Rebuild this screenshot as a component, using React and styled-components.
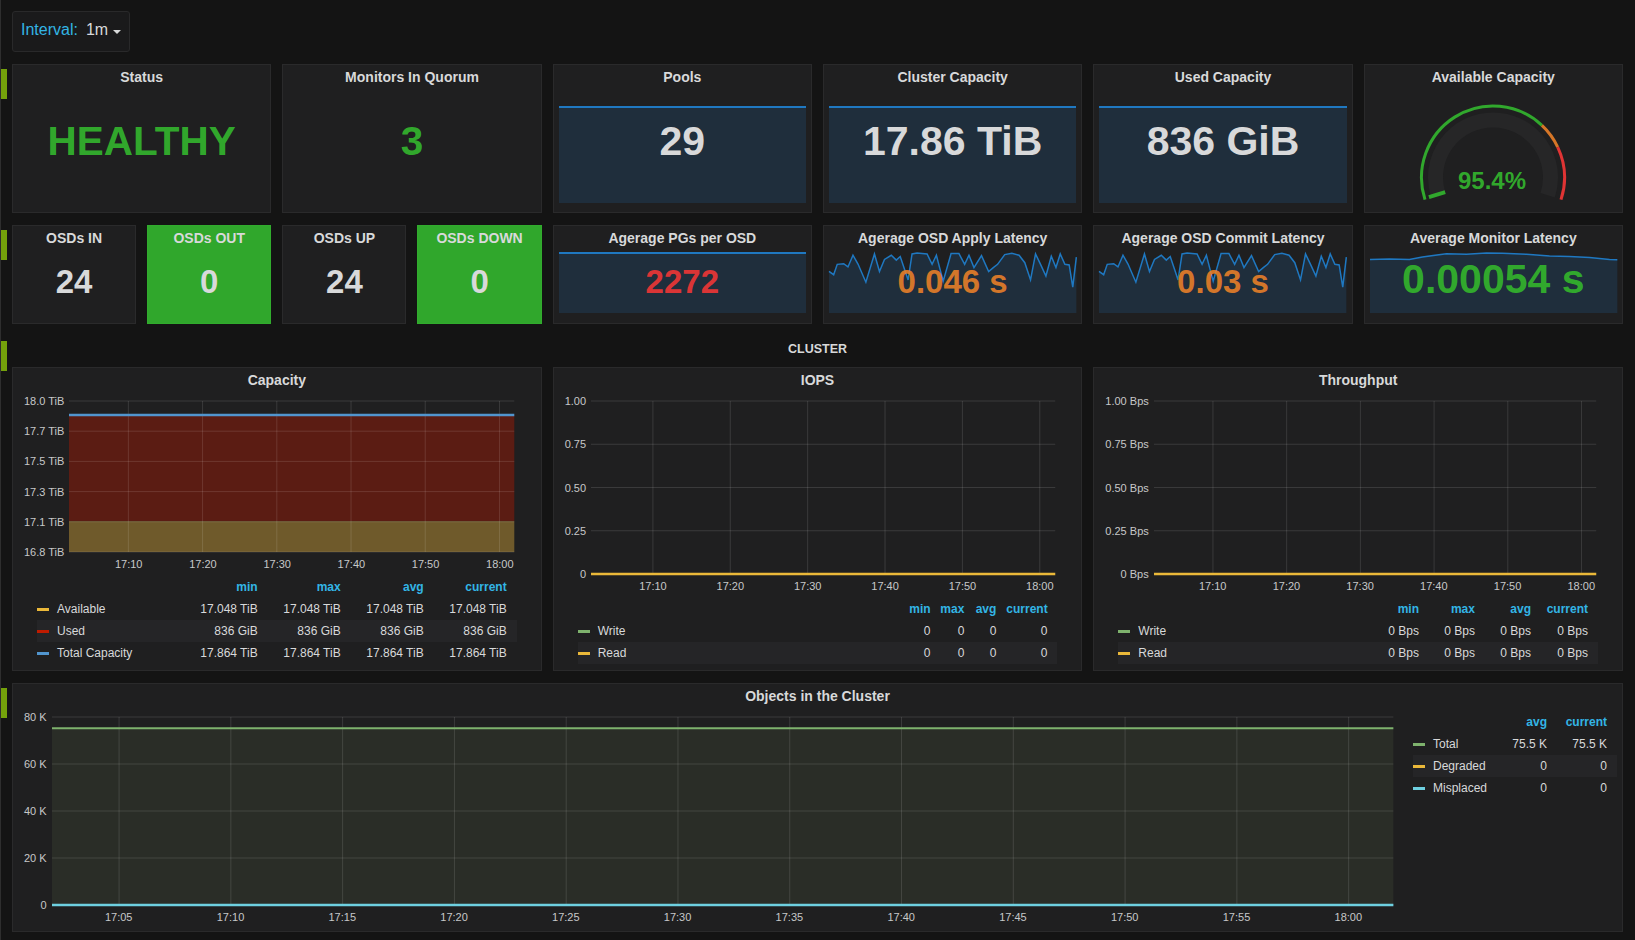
import React from "react";
import styled, { createGlobalStyle } from "styled-components";

const GREEN = "rgba(50, 172, 45, 0.97)";
const ORANGE = "rgba(237, 129, 40, 0.89)";
const RED = "rgba(245, 54, 54, 0.9)";
const TEXT = "#d8d9da";

const GlobalStyle = createGlobalStyle`
  html, body {
    margin: 0;
    padding: 0;
    background: #141414;
  }
  body {
    font-family: "Liberation Sans", Arial, Helvetica, sans-serif;
    color: ${TEXT};
  }
  * {
    box-sizing: border-box;
  }
`;

// sparkline samples, in the coordinates of their own viewBox
const latencySeries = [
  [809, 812], [822, 822], [832, 790], [850, 788], [862, 798], [876, 762],
  [890, 789], [912, 845], [936, 758], [950, 812], [964, 775], [983, 762],
  [997, 777], [1008, 766], [1020, 805], [1030, 838], [1041, 758], [1055, 755],
  [1083, 758], [1097, 790], [1109, 762], [1118, 800], [1128, 842], [1150, 757],
  [1172, 757], [1188, 790], [1200, 762], [1214, 800], [1235, 763], [1255, 812],
  [1268, 800], [1280, 790], [1300, 760], [1320, 756], [1340, 762], [1356, 785],
  [1372, 838], [1386, 758], [1400, 790], [1415, 826], [1430, 765], [1443, 800],
  [1455, 758], [1468, 790], [1480, 792], [1490, 860], [1500, 768]
];
const latencyBox = [809, 752, 691, 188];

const monitorSeries = [
  [1370.6, 258.5], [1390, 258], [1410, 258.6], [1423, 256], [1447, 252.7],
  [1467, 253.3], [1487, 252], [1503, 252.3], [1527, 253.3], [1550, 255],
  [1570, 255.7], [1590, 256.7], [1610, 258.6], [1617.8, 259]
];
const monitorBox = [1370.6, 251, 247.2, 62];

const tenMinuteTicks = ["17:10", "17:20", "17:30", "17:40", "17:50", "18:00"].map(
  (label, i) => ({ label, at: (8 + i * 10) / 60 })
);
const fiveMinuteTicks = [
  "17:05", "17:10", "17:15", "17:20", "17:25", "17:30",
  "17:35", "17:40", "17:45", "17:50", "17:55", "18:00"
].map((label, i) => ({ label, at: (3 + i * 5) / 60 }));

const Page = styled.div`
  height: 940px;
  overflow: hidden;
  padding: 11px 12px 0 0;
  border-left: 1px solid #2e2e2e;
`;

const TopBar = styled.div`
  padding-left: 11px;
  display: flex;
`;

const IntervalPicker = styled.div`
  display: inline-flex;
  align-items: center;
  height: 41px;
  padding: 0 8px 3px;
  background: #1a1a1b;
  border: 1px solid #29292a;
  border-radius: 3px;
  font-size: 16px;
`;

const IntervalLabel = styled.span`
  color: #33b5e5;
  margin-right: 8px;
`;

const IntervalValue = styled.span`
  color: ${TEXT};
`;

const Caret = styled.span`
  width: 0;
  height: 0;
  margin: 3px 0 0 5px;
  border-left: 4px solid transparent;
  border-right: 4px solid transparent;
  border-top: 4px solid ${TEXT};
`;

const Row = styled.section`
  display: flex;
  margin-top: 12px;
`;

const Gutter = styled.div`
  width: 11px;
  flex: none;
`;

const Grip = styled.div`
  width: 6px;
  height: 30px;
  margin-top: 5px;
  background: #74a10b;
`;

const RowBody = styled.div`
  flex: 1;
  min-width: 0;
  display: flex;
  flex-direction: column;
`;

const RowTitle = styled.div`
  height: 31px;
  padding-top: 5px;
  text-align: center;
  font-size: 12.5px;
  font-weight: bold;
  line-height: 16px;
  color: ${TEXT};
`;

const PanelGrid = styled.div`
  display: grid;
  grid-template-columns: repeat(12, 1fr);
  column-gap: 11px;
  height: ${(p) => p.$h}px;
`;

const Panel = styled.div`
  grid-column: span ${(p) => p.$span};
  position: relative;
  display: flex;
  flex-direction: column;
  min-width: 0;
  overflow: hidden;
  background: ${(p) => p.$bg || "#1f1f20"};
  border: 1px solid ${(p) => p.$bg || "#2a2a2b"};
`;

const PanelTitle = styled.div`
  padding-top: 4px;
  height: 21px;
  flex: none;
  text-align: center;
  font-size: 14px;
  font-weight: bold;
  line-height: 16px;
  color: ${TEXT};
  white-space: nowrap;
`;

const StatValue = styled.div`
  position: absolute;
  inset: 0;
  display: flex;
  align-items: center;
  justify-content: center;
  padding-top: ${(p) => p.$shift}px;
  font-size: ${(p) => p.$size}px;
  font-weight: bold;
  line-height: 1;
  color: ${(p) => p.$color || TEXT};
  white-space: nowrap;
  pointer-events: none;
`;

const SparkBox = styled.div`
  position: absolute;
  left: 5px;
  right: 5px;
  bottom: ${(p) => p.$bottom}px;
  height: ${(p) => p.$height}px;
`;

const FlatSpark = styled(SparkBox)`
  background: rgba(31, 118, 189, 0.18);
  border-top: 2px solid #1f78c1;
`;

const SparkSvg = styled.svg`
  display: block;
  width: 100%;
  height: 100%;
  overflow: visible;
`;

const GaugeBox = styled.div`
  display: flex;
  justify-content: center;
  margin-top: 16px;
`;

const GraphBody = styled.div`
  flex: 1;
  min-height: 0;
  display: flex;
  flex-direction: ${(p) => (p.$side ? "row" : "column")};
  padding-bottom: ${(p) => (p.$side ? 0 : 6)}px;
`;

const ChartGrid = styled.div`
  flex: 1;
  min-height: 0;
  min-width: 0;
  display: grid;
  grid-template-columns: auto 1fr;
  grid-template-rows: 1fr 24px;
  column-gap: 5px;
  margin: 12px 0 ${(p) => p.$mb || 0}px;
  padding: 0 ${(p) => p.$padR}px 0 11px;
`;

const YAxis = styled.div`
  display: flex;
  flex-direction: column;
  justify-content: space-between;
  margin: -6px 0;
  text-align: right;
  font-size: 11px;
  line-height: 12px;
  color: #c7c8c9;
  white-space: nowrap;
`;

const PlotArea = styled.div`
  position: relative;
  min-width: 0;
`;

const PlotSvg = styled.svg`
  position: absolute;
  inset: 0;
  width: 100%;
  height: 100%;
  overflow: visible;
`;

const XAxis = styled.div`
  grid-column: 2;
  position: relative;
  font-size: 11px;
  line-height: 12px;
  color: #c7c8c9;
`;

const XTick = styled.span`
  position: absolute;
  top: 6px;
  transform: translateX(-50%);
  white-space: nowrap;
`;

const Legend = styled.div`
  flex: none;
  width: ${(p) => p.$width || "auto"};
  margin: ${(p) => p.$margin};
  align-self: ${(p) => (p.$width ? "flex-start" : "stretch")};
  font-size: 12px;
`;

const LegendRow = styled.div`
  display: grid;
  grid-template-columns: ${(p) => p.$cols};
  align-items: center;
  height: 22px;
  white-space: nowrap;
  &:nth-child(2n + 3) {
    background: #252527;
  }
`;

const LegendCell = styled.span`
  text-align: right;
  padding-right: 10px;
  color: ${TEXT};
`;

const LegendHead = styled(LegendCell)`
  font-weight: bold;
  color: #33b5e5;
`;

const LegendLabel = styled.span`
  display: flex;
  align-items: center;
  gap: 8px;
  color: ${TEXT};
`;

const Swatch = styled.i`
  width: 12px;
  height: 3px;
  background: ${(p) => p.$color};
`;

const SparkLine = ({ points, box, height, bottom }) => {
  const [x0, y0, w, h] = box;
  const line = points.map((p) => p.join(",")).join(" ");
  const area = `${x0},${y0 + h} ${line} ${x0 + w},${y0 + h}`;
  return (
    <SparkBox $height={height} $bottom={bottom}>
      <SparkSvg viewBox={box.join(" ")} preserveAspectRatio="none">
        <polygon points={area} fill="rgba(31, 118, 189, 0.18)" />
        <polyline
          points={line}
          fill="none"
          stroke="#1f78c1"
          strokeWidth="1.5"
          vectorEffect="non-scaling-stroke"
        />
      </SparkSvg>
    </SparkBox>
  );
};

const Stat = ({ title, span, value, color, size, shift, bg, children }) => (
  <Panel $span={span} $bg={bg}>
    <PanelTitle>{title}</PanelTitle>
    {children}
    <StatValue $color={color} $size={size} $shift={shift}>
      {value}
    </StatValue>
  </Panel>
);

const polar = (cx, cy, r, deg) => {
  const a = (deg * Math.PI) / 180;
  return [cx + r * Math.cos(a), cy - r * Math.sin(a)];
};

const arcPath = (cx, cy, r, from, to) => {
  const [x1, y1] = polar(cx, cy, r, from);
  const [x2, y2] = polar(cx, cy, r, to);
  const large = from - to > 180 ? 1 : 0;
  return `M${x1} ${y1} A${r} ${r} 0 ${large} 1 ${x2} ${y2}`;
};

const Gauge = () => {
  const cx = 78;
  const cy = 75.5;
  const start = 198;
  const end = -18;
  const span = start - end;
  const g = start - span * 0.7;
  const o = start - span * 0.8;
  const [mx1, my1] = polar(cx, cy, 50, start - 1);
  const [mx2, my2] = polar(cx, cy, 67, start - 1);
  return (
    <svg width="156" height="104" viewBox="0 0 156 104">
      <path d={arcPath(cx, cy, 57.5, start, end)} fill="none" stroke="#262627" strokeWidth="15" />
      <path d={arcPath(cx, cy, 71.5, start, g)} fill="none" stroke={GREEN} strokeWidth="3" />
      <path d={arcPath(cx, cy, 71.5, g, o)} fill="none" stroke={ORANGE} strokeWidth="3" />
      <path d={arcPath(cx, cy, 71.5, o, end)} fill="none" stroke={RED} strokeWidth="3" />
      <line x1={mx1} y1={my1} x2={mx2} y2={my2} stroke={GREEN} strokeWidth="4" />
      <text
        x="77"
        y="87"
        textAnchor="middle"
        fontFamily='"Liberation Sans", Arial, sans-serif'
        fontWeight="bold"
        fontSize="24"
        fill={GREEN}
      >
        95.4%
      </text>
    </svg>
  );
};

const Chart = ({ yLabels, ticks, under, over, padR, mb }) => {
  const n = yLabels.length;
  return (
    <ChartGrid $padR={padR} $mb={mb}>
      <YAxis>
        {yLabels.map((l) => (
          <span key={l}>{l}</span>
        ))}
      </YAxis>
      <PlotArea>
        <PlotSvg viewBox="0 0 1000 1000" preserveAspectRatio="none">
          {under}
          {yLabels.map((l, i) => (
            <line
              key={"h" + l}
              x1="0"
              x2="1000"
              y1={(i / (n - 1)) * 1000}
              y2={(i / (n - 1)) * 1000}
              stroke="rgba(255,255,255,0.12)"
              strokeWidth="1"
              vectorEffect="non-scaling-stroke"
            />
          ))}
          {ticks.map((t) => (
            <line
              key={"v" + t.label}
              x1={t.at * 1000}
              x2={t.at * 1000}
              y1="0"
              y2="1000"
              stroke="rgba(255,255,255,0.12)"
              strokeWidth="1"
              vectorEffect="non-scaling-stroke"
            />
          ))}
          {over}
        </PlotSvg>
      </PlotArea>
      <XAxis>
        {ticks.map((t) => (
          <XTick key={t.label} style={{ left: `${t.at * 100}%` }}>
            {t.label}
          </XTick>
        ))}
      </XAxis>
    </ChartGrid>
  );
};

const HLine = ({ y, color, width = 2 }) => (
  <line
    x1="0"
    x2="1000"
    y1={y}
    y2={y}
    stroke={color}
    strokeWidth={width}
    vectorEffect="non-scaling-stroke"
  />
);

const LegendTable = ({ cols, heads, rows, width, margin }) => (
  <Legend $width={width} $margin={margin}>
    <LegendRow $cols={cols}>
      <span />
      {heads.map((h) => (
        <LegendHead key={h}>{h}</LegendHead>
      ))}
    </LegendRow>
    {rows.map((r) => (
      <LegendRow key={r.name} $cols={cols}>
        <LegendLabel>
          <Swatch $color={r.color} />
          {r.name}
        </LegendLabel>
        {r.values.map((v, i) => (
          <LegendCell key={i}>{v}</LegendCell>
        ))}
      </LegendRow>
    ))}
  </Legend>
);

const GraphPanel = ({ title, span, children }) => (
  <Panel $span={span}>
    <PanelTitle>{title}</PanelTitle>
    {children}
  </Panel>
);

export default function App() {
  return (
    <>
      <GlobalStyle />
      <Page>
        <TopBar>
          <IntervalPicker>
            <IntervalLabel>Interval:</IntervalLabel>
            <IntervalValue>1m</IntervalValue>
            <Caret />
          </IntervalPicker>
        </TopBar>

        <Row>
          <Gutter>
            <Grip />
          </Gutter>
          <RowBody>
            <PanelGrid $h={149}>
              <Stat title="Status" span={2} value="HEALTHY" color={GREEN} size={40.5} shift={6} />
              <Stat title="Monitors In Quorum" span={2} value="3" color={GREEN} size={40.5} shift={6} />
              <Stat title="Pools" span={2} value="29" size={41} shift={6}>
                <FlatSpark $height={97} $bottom={9} />
              </Stat>
              <Stat title="Cluster Capacity" span={2} value="17.86 TiB" size={41} shift={6}>
                <FlatSpark $height={97} $bottom={9} />
              </Stat>
              <Stat title="Used Capacity" span={2} value="836 GiB" size={41} shift={6}>
                <FlatSpark $height={97} $bottom={9} />
              </Stat>
              <GraphPanel title="Available Capacity" span={2}>
                <GaugeBox>
                  <Gauge />
                </GaugeBox>
              </GraphPanel>
            </PanelGrid>
          </RowBody>
        </Row>

        <Row>
          <Gutter>
            <Grip />
          </Gutter>
          <RowBody>
            <PanelGrid $h={99}>
              <Stat title="OSDs IN" span={1} value="24" size={33} shift={14} />
              <Stat title="OSDs OUT" span={1} value="0" size={33} shift={14} bg={GREEN} />
              <Stat title="OSDs UP" span={1} value="24" size={33} shift={14} />
              <Stat title="OSDs DOWN" span={1} value="0" size={33} shift={14} bg={GREEN} />
              <Stat title="Agerage PGs per OSD" span={2} value="2272" color={RED} size={33} shift={14}>
                <FlatSpark $height={61} $bottom={10} />
              </Stat>
              <Stat title="Agerage OSD Apply Latency" span={2} value="0.046 s" color={ORANGE} size={33} shift={14}>
                <SparkLine points={latencySeries} box={latencyBox} height={61} bottom={10} />
              </Stat>
              <Stat title="Agerage OSD Commit Latency" span={2} value="0.03 s" color={ORANGE} size={33} shift={14}>
                <SparkLine points={latencySeries} box={latencyBox} height={61} bottom={10} />
              </Stat>
              <Stat title="Average Monitor Latency" span={2} value="0.00054 s" color={GREEN} size={41} shift={9}>
                <SparkLine points={monitorSeries} box={monitorBox} height={61} bottom={10} />
              </Stat>
            </PanelGrid>
          </RowBody>
        </Row>

        <Row>
          <Gutter>
            <Grip />
          </Gutter>
          <RowBody>
            <RowTitle>CLUSTER</RowTitle>
            <PanelGrid $h={304}>
              <GraphPanel title="Capacity" span={4}>
                <GraphBody>
                  <Chart
                    padR={26}
                    yLabels={["18.0 TiB", "17.7 TiB", "17.5 TiB", "17.3 TiB", "17.1 TiB", "16.8 TiB"]}
                    ticks={tenMinuteTicks}
                    under={
                      <>
                        <rect x="0" y="92" width="1000" height="704" fill="#5b1c13" />
                        <rect x="0" y="796" width="1000" height="204" fill="#6f5a2b" />
                      </>
                    }
                    over={<HLine y={92} color="#5195ce" width={2.5} />}
                  />
                  <LegendTable
                    margin="0 24px"
                    cols="1fr 83px 83px 83px 83px"
                    heads={["min", "max", "avg", "current"]}
                    rows={[
                      { name: "Available", color: "#eab839", values: ["17.048 TiB", "17.048 TiB", "17.048 TiB", "17.048 TiB"] },
                      { name: "Used", color: "#bf1b00", values: ["836 GiB", "836 GiB", "836 GiB", "836 GiB"] },
                      { name: "Total Capacity", color: "#5195ce", values: ["17.864 TiB", "17.864 TiB", "17.864 TiB", "17.864 TiB"] }
                    ]}
                  />
                </GraphBody>
              </GraphPanel>

              <GraphPanel title="IOPS" span={4}>
                <GraphBody>
                  <Chart
                    padR={26}
                    yLabels={["1.00", "0.75", "0.50", "0.25", "0"]}
                    ticks={tenMinuteTicks}
                    over={<HLine y={1000} color="#eab839" width={2.5} />}
                  />
                  <LegendTable
                    margin="0 24px"
                    cols="1fr 31px 34px 32px 51px"
                    heads={["min", "max", "avg", "current"]}
                    rows={[
                      { name: "Write", color: "#7eb26d", values: ["0", "0", "0", "0"] },
                      { name: "Read", color: "#eab839", values: ["0", "0", "0", "0"] }
                    ]}
                  />
                </GraphBody>
              </GraphPanel>

              <GraphPanel title="Throughput" span={4}>
                <GraphBody>
                  <Chart
                    padR={26}
                    yLabels={["1.00 Bps", "0.75 Bps", "0.50 Bps", "0.25 Bps", "0 Bps"]}
                    ticks={tenMinuteTicks}
                    over={<HLine y={1000} color="#eab839" width={2.5} />}
                  />
                  <LegendTable
                    margin="0 24px"
                    cols="1fr 56px 56px 56px 57px"
                    heads={["min", "max", "avg", "current"]}
                    rows={[
                      { name: "Write", color: "#7eb26d", values: ["0 Bps", "0 Bps", "0 Bps", "0 Bps"] },
                      { name: "Read", color: "#eab839", values: ["0 Bps", "0 Bps", "0 Bps", "0 Bps"] }
                    ]}
                  />
                </GraphBody>
              </GraphPanel>
            </PanelGrid>
          </RowBody>
        </Row>

        <Row>
          <Gutter>
            <Grip />
          </Gutter>
          <RowBody>
            <PanelGrid $h={249}>
              <GraphPanel title="Objects in the Cluster" span={12}>
                <GraphBody $side>
                  <Chart
                    padR={0}
                    mb={2}
                    yLabels={["80 K", "60 K", "40 K", "20 K", "0"]}
                    ticks={fiveMinuteTicks}
                    under={<rect x="0" y="60" width="1000" height="940" fill="#2a2d27" />}
                    over={
                      <>
                        <HLine y={60} color="#7eb26d" />
                        <HLine y={1000} color="#6ed0e0" width={2.5} />
                      </>
                    }
                  />
                  <LegendTable
                    width="204px"
                    margin="6px 5px 0 20px"
                    cols="1fr 60px 60px"
                    heads={["avg", "current"]}
                    rows={[
                      { name: "Total", color: "#7eb26d", values: ["75.5 K", "75.5 K"] },
                      { name: "Degraded", color: "#eab839", values: ["0", "0"] },
                      { name: "Misplaced", color: "#6ed0e0", values: ["0", "0"] }
                    ]}
                  />
                </GraphBody>
              </GraphPanel>
            </PanelGrid>
          </RowBody>
        </Row>
      </Page>
    </>
  );
}
